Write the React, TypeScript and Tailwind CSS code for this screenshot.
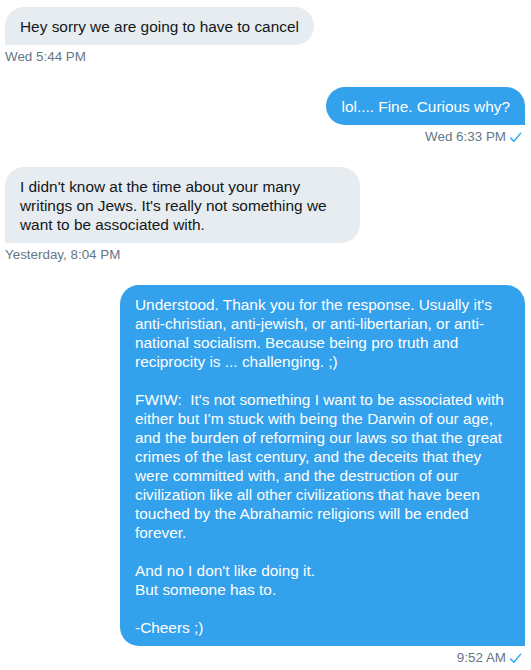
import React from "react";

const Check = () => (
  <svg width="13" height="13" viewBox="0 0 12 12" className="ml-[3px] inline-block" fill="none">
    <path d="M1.5 6.5 L4.5 9.5 L10.8 2" stroke="#1da1f2" strokeWidth="1.2" strokeLinecap="round" strokeLinejoin="round" />
  </svg>
);

function Left({ lines, time, w = "" }: { lines: string[]; time: string; w?: string }) {
  return (
    <div className="flex flex-col items-start">
      <div className={"bg-[#e6ecf0] text-[#14171a] rounded-[19px] rounded-bl-none px-[15px] py-[9.5px] text-[15.4px] leading-[19px] whitespace-nowrap " + w}>
        {lines.map((l, i) => (
          <div key={i}>{l === "" ? "\u00a0" : l}</div>
        ))}
      </div>
      <div className="mt-[4px] text-[13.4px] leading-[16px] text-[#657786]">{time}</div>
    </div>
  );
}

function Right({ lines, time, w = "" }: { lines: string[]; time: string; w?: string }) {
  return (
    <div className="flex flex-col items-end">
      <div className={"bg-[#33a1ec] text-white rounded-[19px] rounded-br-none px-[15px] py-[9.5px] text-[15.4px] leading-[19px] whitespace-pre " + w}>
        {lines.map((l, i) => (
          <div key={i}>{l === "" ? "\u00a0" : l}</div>
        ))}
      </div>
      <div className="mt-[4px] mr-[3px] flex items-center text-[13.4px] leading-[16px] text-[#657786]">
        {time}
        <Check />
      </div>
    </div>
  );
}

export default function App() {
  return (
    <div
      className="w-[531px] h-[670px] bg-white pl-[5px] pr-[6px] pt-[7px] flex flex-col gap-[22px] overflow-hidden"
      style={{ fontFamily: '"Liberation Sans", Arial, sans-serif' }}
    >
      <Left lines={["Hey sorry we are going to have to cancel"]} time="Wed 5:44 PM" />
      <Right lines={["lol.... Fine. Curious why?"]} time="Wed 6:33 PM" />
      <Left
        w="w-[355px]"
        lines={[
          "I didn't know at the time about your many",
          "writings on Jews. It's really not something we",
          "want to be associated with.",
        ]}
        time="Yesterday, 8:04 PM"
      />
      <Right
        w="w-[405px]"
        lines={[
          "Understood. Thank you for the response. Usually it's",
          "anti-christian, anti-jewish, or anti-libertarian, or anti-",
          "national socialism. Because being pro truth and",
          "reciprocity is ... challenging. ;)",
          "",
          "FWIW:  It's not something I want to be associated with",
          "either but I'm stuck with being the Darwin of our age,",
          "and the burden of reforming our laws so that the great",
          "crimes of the last century, and the deceits that they",
          "were committed with, and the destruction of our",
          "civilization like all other civilizations that have been",
          "touched by the Abrahamic religions will be ended",
          "forever.",
          "",
          "And no I don't like doing it.",
          "But someone has to.",
          "",
          "-Cheers ;)",
        ]}
        time="9:52 AM"
      />
    </div>
  );
}
